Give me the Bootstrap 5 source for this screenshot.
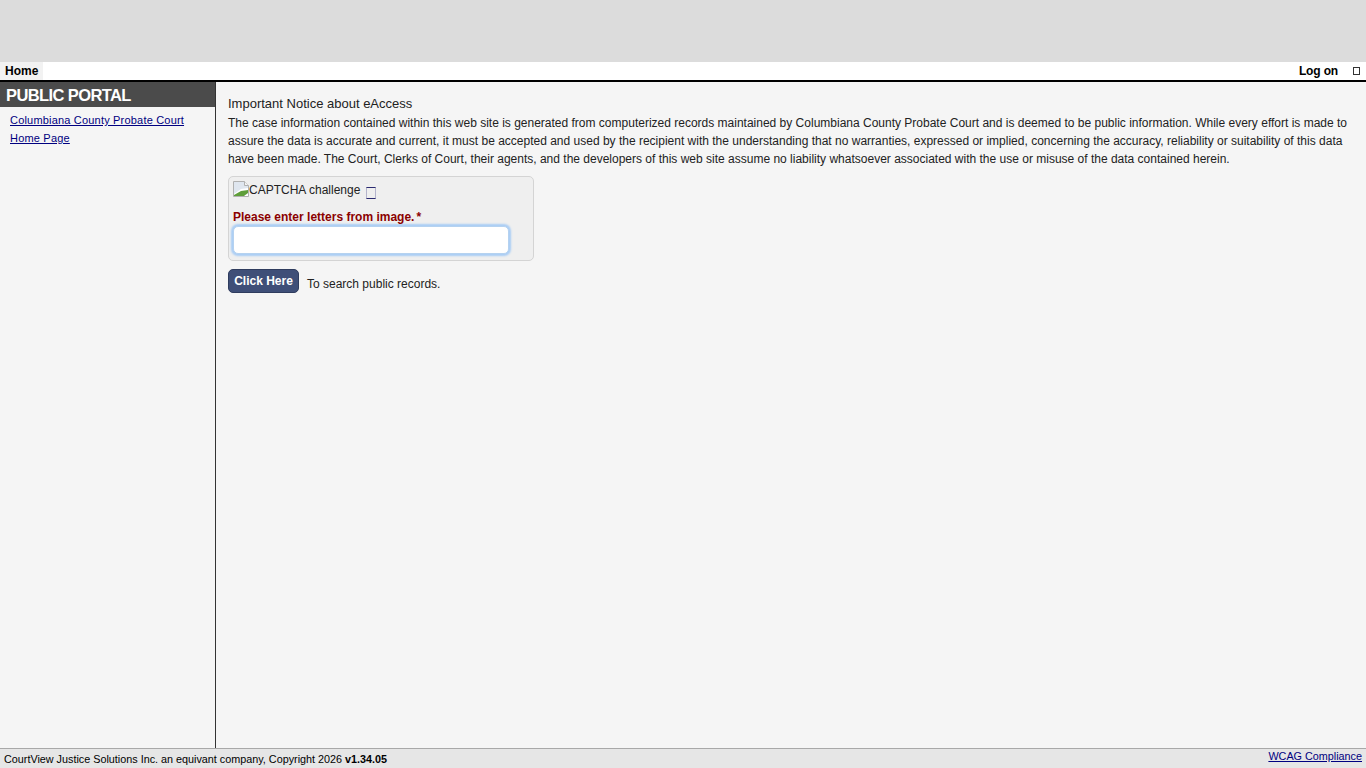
<!DOCTYPE html>
<html lang="en">
<head>
<meta charset="utf-8">
<title>Public Portal</title>
<link href="https://cdn.jsdelivr.net/npm/bootstrap@5.3.0/dist/css/bootstrap.min.css" rel="stylesheet">
<style>
html,body{height:100%;overflow:hidden}
body{font-family:"Liberation Sans",Arial,sans-serif;font-size:12px;color:#222;background:#f5f5f5;line-height:18px}
.pg{height:768px}
.topband{height:62px;background:#dcdcdc}
.menubar{height:20px;background:#fff;border-bottom:2px solid #000;font-weight:700;color:#000}
.hometab{width:43px;height:18px;background:#f2f2f2;padding-left:5px;line-height:18px}
.logon{line-height:18px;padding-right:6px;letter-spacing:-.15px}
.glyphbox{display:inline-block;width:7px;height:8px;border:1px solid #333;margin-left:15px}
.mainarea{min-height:0}
.sidepane{width:216px;border-right:1px solid #333;flex:none}
.sidehead{height:25px;background:#4b4b4b;color:#fff;font-size:16.5px;font-weight:700;line-height:26px;padding-left:6px;letter-spacing:-.6px}
.sidelinks{padding:4px 0 0 10px;font-size:11px;letter-spacing:.19px}
.sidelinks a{display:block;color:#000080;line-height:18px}
.content{padding:12px 12px 0 12px;min-width:0}
.noticehead{line-height:20px;font-size:13px}
.noticetext{line-height:18px;margin:0 0 8px;font-size:12px}
.capbox{width:306px;height:85px;background:#efefef;border:1px solid #d4d4d4;border-radius:5px;padding:4px}
.capimg{height:18px;line-height:18px}
.capimg svg{vertical-align:-3px}
.reload{display:inline-block;width:10px;height:12px;border:1px solid #b4b4cc;border-top-color:#2a2a70;border-bottom-color:#2a2a70;margin-left:6px;vertical-align:-5px}
.caplabel{color:#8b0000;font-weight:700;margin-top:9px;line-height:18px}
.capstar{margin-left:2px}
.capinput{display:block;width:276px;height:28px;background:#fff;border:1px solid #b5d2f0;border-radius:5px;box-shadow:0 0 2px 2px #a9cdf5;outline:0}
.clickbtn{background:#3f4f78;color:#fff;font-weight:700;font-size:12px;border:1px solid #2f3c5e;border-radius:5px;width:71px;height:24px;padding:0;line-height:22px}
.clickrow{margin-top:8px}
.clicknote{margin-left:8px;position:relative;top:6px}
.footbar{height:20px;background:#e6e6e6;border-top:1px solid #a8a8a8;font-size:10.8px;color:#000;padding:0 4px;line-height:20px}
.footbar a{color:#000080;font-size:10.8px;line-height:14px;align-self:flex-start}
</style>
</head>
<body>
<div class="pg d-flex flex-column">
  <div class="topband"></div>
  <div class="menubar d-flex justify-content-between">
    <div class="hometab">Home</div>
    <div class="logon">Log on<span class="glyphbox"></span></div>
  </div>
  <div class="mainarea d-flex flex-grow-1">
    <div class="sidepane">
      <div class="sidehead">PUBLIC PORTAL</div>
      <div class="sidelinks">
        <a href="#">Columbiana County Probate Court</a>
        <a href="#">Home Page</a>
      </div>
    </div>
    <div class="content flex-grow-1">
      <div class="noticehead">Important Notice about eAccess</div>
      <p class="noticetext">The case information contained within this web site is generated from computerized records maintained by Columbiana County Probate Court and is deemed to be public information. While every effort is made to assure the data is accurate and current, it must be accepted and used by the recipient with the understanding that no warranties, expressed or implied, concerning the accuracy, reliability or suitability of this data have been made. The Court, Clerks of Court, their agents, and the developers of this web site assume no liability whatsoever associated with the use or misuse of the data contained herein.</p>
      <div class="capbox">
        <div class="capimg"><svg width="16" height="16" viewBox="0 0 16 16"><path d="M.5.5h11l4 4v11H.5z" fill="#dfe6ef" stroke="#b0b0b0"/><path d="M11.5.5v4h4" fill="#f4f4f4" stroke="#b0b0b0"/><path d="M1 15V13L8 8l7-1v8z" fill="#fff"/><path d="M1 15v-1l7-4 7-1v3l-4 3z" fill="#5f9e3a"/></svg>CAPTCHA challenge<span class="reload"></span></div>
        <div class="caplabel">Please enter letters from image.<span class="capstar">*</span></div>
        <input class="capinput" type="text" aria-label="Please enter letters from image">
      </div>
      <div class="clickrow d-flex align-items-start">
        <button class="clickbtn" type="button">Click Here</button>
        <span class="clicknote">To search public records.</span>
      </div>
    </div>
  </div>
  <div class="footbar d-flex justify-content-between">
    <div>CourtView Justice Solutions Inc. an equivant company, Copyright 2026 <b>v1.34.05</b></div>
    <a href="#">WCAG Compliance</a>
  </div>
</div>
<script src="https://cdn.jsdelivr.net/npm/bootstrap@5.3.0/dist/js/bootstrap.bundle.min.js"></script>
</body>
</html>
